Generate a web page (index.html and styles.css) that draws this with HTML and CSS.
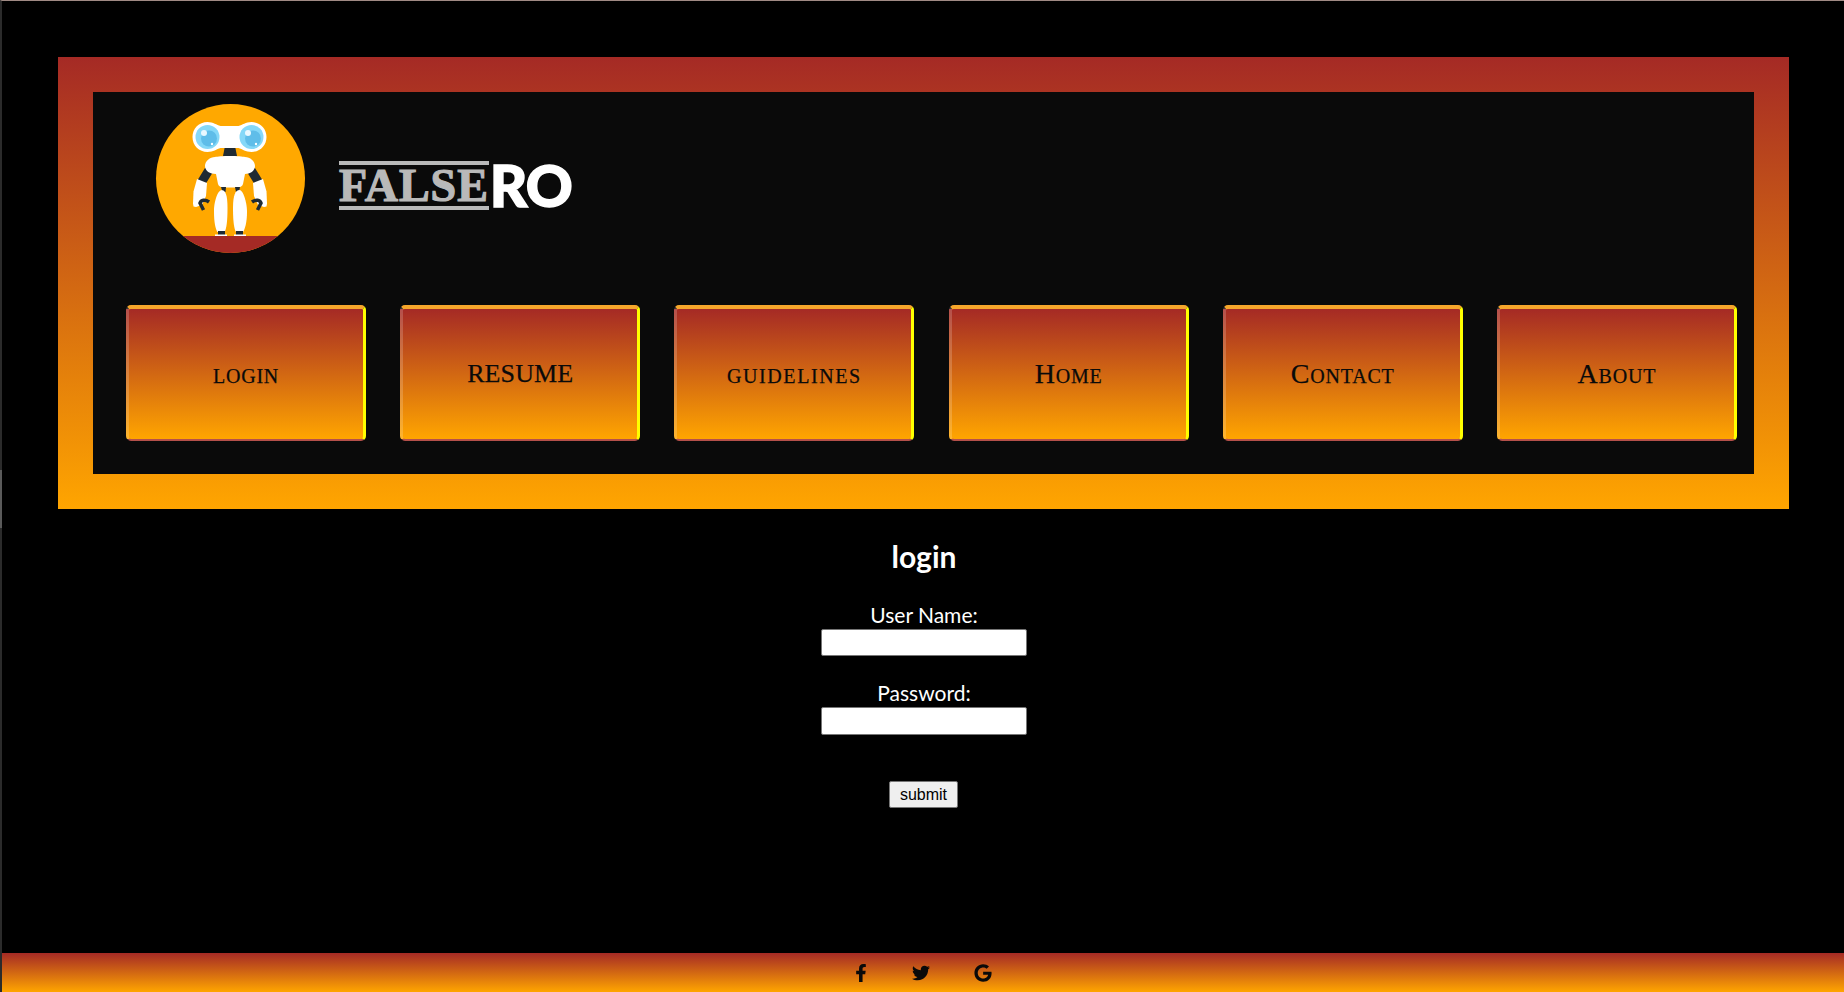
FILE: index.html
```html
<!DOCTYPE html>
<html lang="en">
<head>
<meta charset="utf-8">
<title>login</title>
<link rel="stylesheet" href="styles.css">
</head>
<body>
<div class="page">
  <span class="rail-mark"></span>
  <main class="content">
    <header class="banner">
      <div class="banner-inner">
        <div class="brand">
          <svg class="robot" viewBox="0 0 160 160" aria-hidden="true">
            <defs><clipPath id="disc"><circle cx="80.5" cy="78.5" r="74.5"/></clipPath></defs>
            <circle cx="80.5" cy="78.5" r="74.5" fill="#ffa800"/>
            <rect x="0" y="136" width="160" height="24" fill="#a52a25" clip-path="url(#disc)"/>
            <path d="M75 46h10l2 10H73z" fill="#1f2a33"/>
            <path d="M57.500 22c6 0 9 3 13 4h18c4-1 7-4 13-4 8.500 0 15 6.500 15 15s-6.500 15-15 15c-6 0-9-3-13-4H70.500c-4 1-7 4-13 4-8.500 0-15-6.500-15-15s6.500-15 15-15z" fill="#fff"/>
            <circle cx="57.500" cy="37" r="12" fill="#85d8f8"/>
            <circle cx="59" cy="38.500" r="8" fill="#5fbde9"/>
            <circle cx="54" cy="33" r="3" fill="#e9f8ff"/>
            <circle cx="62" cy="44" r="1.200" fill="#fff"/>
            <circle cx="101.500" cy="37" r="12" fill="#85d8f8"/>
            <circle cx="103" cy="38.500" r="8" fill="#5fbde9"/>
            <circle cx="98" cy="33" r="3" fill="#e9f8ff"/>
            <circle cx="106" cy="44" r="1.200" fill="#fff"/>
            <path d="M59 70L51 83" stroke="#1f2a33" stroke-width="9" fill="none"/>
            <path d="M101 70L109 83" stroke="#1f2a33" stroke-width="9" fill="none"/>
            <path d="M47 79l10 4-1 13-4 9-6 2-2.500-.5-.5-3 .5-12z" fill="#fff"/>
            <path d="M113 79l-10 4 1 13 4 9 6 2 2.500-.5.5-3-.5-12z" fill="#fff"/>
            <path d="M59 102c-4-3-8-2-9 1l3.500 7" stroke="#1f2a33" stroke-width="3.500" fill="none"/>
            <path d="M102 102c4-3 8-2 9 1l-3.500 7" stroke="#1f2a33" stroke-width="3.500" fill="none"/>
            <path d="M65 57c4-1.500 26-1.500 30 0 5 0 10 4 10 9s-5 8-10 8l-2 10c-.5 2-3 3.500-5 3.500H73c-2 0-4.500-1.500-5-3.500l-2-10c-6 0-11-3-11-8s5-9 10-9z" fill="#fff"/>
            <path d="M71 87h5l-.5 5h-3zM85 87h5l-1 5h-3z" fill="#1f2a33"/>
            <path d="M71.500 90c4 0 6 5 6 18s-1 21-3 24h-7c-2-3-3.500-10-3.500-20 0-10 3.500-22 8-22z" fill="#fff"/>
            <path d="M89.500 90c-4 0-6.500 5-6.500 18s1 21 3 24h7c2-3 4-10 4-20s-4-22-7.500-22z" fill="#fff"/>
            <path d="M68 131h7v4h-7zM86 131h7v4h-7z" fill="#1f2a33"/>
            <path d="M65 134.500h12v1.500H65zM84 134.500h12v1.500H84z" fill="#fff"/>
          </svg>
          <div class="wordmark"><span class="word-false">FALSE</span><span class="word-ro">RO</span></div>
        </div>
        <nav class="nav">
          <a class="nav-btn caps" href="#">login</a>
          <a class="nav-btn resume" href="#">RESUME</a>
          <a class="nav-btn caps caps-wide" href="#">guidelines</a>
          <a class="nav-btn caps" href="#">Home</a>
          <a class="nav-btn caps" href="#">Contact</a>
          <a class="nav-btn caps" href="#">About</a>
        </nav>
      </div>
    </header>
    <form class="login">
      <h1 class="login-title">login</h1>
      <label class="field">User Name:<input class="input" type="text"></label>
      <label class="field">Password:<input class="input" type="password"></label>
      <button class="submit" type="button">submit</button>
    </form>
  </main>
  <footer class="footer">
    <svg class="icon" viewBox="0 0 320 512" aria-label="Facebook"><path d="M279.14 288l14.22-92.66h-88.91v-60.13c0-25.35 12.42-50.06 52.24-50.06h40.42V6.26S260.43 0 225.36 0c-73.22 0-121.08 44.38-121.08 124.72v70.62H22.89V288h81.39v224h100.17V288z"/></svg>
    <svg class="icon" viewBox="0 0 512 512" aria-label="Twitter"><path d="M459.37 151.716c.325 4.548.325 9.097.325 13.645 0 138.72-105.583 298.558-298.558 298.558-59.452 0-114.68-17.219-161.137-47.106 8.447.974 16.568 1.299 25.34 1.299 49.055 0 94.213-16.568 130.274-44.832-46.132-.975-84.792-31.188-98.112-72.772 6.498.974 12.995 1.624 19.818 1.624 9.421 0 18.843-1.3 27.614-3.573-48.081-9.747-84.143-51.98-84.143-102.985v-1.299c13.969 7.797 30.214 12.67 47.431 13.319-28.264-18.843-46.781-51.005-46.781-87.391 0-19.492 5.197-37.36 14.294-52.954 51.655 63.675 129.3 105.258 216.365 109.807-1.624-7.797-2.599-15.918-2.599-24.04 0-57.828 46.782-104.934 104.934-104.934 30.213 0 57.502 12.67 76.67 33.137 23.715-4.548 46.456-13.32 66.599-25.34-7.798 24.366-24.366 44.833-46.132 57.827 21.117-2.273 41.584-8.122 60.426-16.243-14.292 20.791-32.161 39.308-52.628 54.253z"/></svg>
    <svg class="icon icon-last" viewBox="0 0 488 512" aria-label="Google"><path d="M488 261.8C488 403.3 391.1 504 248 504 110.8 504 0 393.2 0 256S110.8 8 248 8c66.8 0 123 24.5 166.3 64.9l-67.5 64.9C258.5 52.6 94.3 116.6 94.3 256c0 86.5 69.1 156.6 153.7 156.6 98.2 0 135-70.4 140.8-106.9H248v-85.3h236.1c2.3 12.7 3.9 24.9 3.9 41.4z"/></svg>
  </footer>
</div>
</body>
</html>
```
FILE: styles.css
```css
* { box-sizing: border-box; }
html, body { margin: 0; height: 100%; background: #000; }
body { overflow: hidden; }
.page {
  position: relative;
  height: 992px;
  display: flex;
  flex-direction: column;
  border-top: 1px solid #a08a84;
  border-left: 2px solid #2b2b2b;
  background: #000;
}
.rail-mark { position: absolute; left: -2px; top: 469px; width: 2px; height: 58px; background: #5a5a5a; }
.content { flex: 1; padding: 56px 55px 0 56px; }
.banner { border: 35px solid transparent; height: 452px; background: linear-gradient(#a52a25, #ffa500) border-box; }
.banner-inner { height: 382px; background: #0a0a0a; display: flex; flex-direction: column; }
.brand { height: 213px; display: flex; align-items: flex-start; padding: 8px 0 0 57px; }
.robot { width: 160px; height: 160px; flex: none; }
.wordmark { display: flex; align-items: center; margin: 59px 0 0 29px; }
.word-false {
  font: bold 46px/41px "Liberation Serif", serif;
  letter-spacing: 1px;
  color: #b9b9b9;
  -webkit-text-stroke: 1.2px #b9b9b9;
  border-top: 4px solid #b9b9b9;
  border-bottom: 4px solid #b9b9b9;
  height: 49px;
}
.word-ro {
  font: 900 58px/52px "Lato", sans-serif;
  color: #fff;
  -webkit-text-stroke: 1.5px #fff;
  margin-left: 1px;
  letter-spacing: -1px;
}
.nav { display: flex; justify-content: space-between; padding: 0 17px 0 33px; }
.nav-btn {
  width: 240px;
  height: 136px;
  display: flex;
  align-items: center;
  justify-content: center;
  border-style: solid;
  border-width: 4px 3px 2px 3px;
  border-color: #f6a62b #ffff00 #b5504a rgba(255,255,255,.18);
  border-radius: 5px;
  background: linear-gradient(#a52a25, #ffa500);
  color: #0a0a0a;
  -webkit-text-stroke: .25px #0a0a0a;
  text-decoration: none;
  font-family: "Liberation Serif", serif;
}
.caps { font-size: 28px; font-variant: small-caps; letter-spacing: .8px; }
.caps-wide { letter-spacing: 1.6px; }
.resume { font-size: 26px; letter-spacing: .1px; }
.login { display: flex; flex-direction: column; align-items: center; color: #fff; margin-right: -1px; }
.login-title { font: bold 30px/34px "Lato", sans-serif; margin: 30px 0 0; }
.field { display: flex; flex-direction: column; align-items: center; font: 21px/28px "Lato", sans-serif; margin-top: 28px; }
.field + .field { margin-top: 23px; }
.field + .field .input { height: 28px; }
.input { width: 206px; height: 27px; margin: 0; border: 1px solid #767676; border-radius: 2px; background: #fff; display: block; }
.submit {
  width: 69px;
  height: 27px;
  margin: 46px 1px 0 0;
  padding: 0;
  font: 16px "Liberation Sans", sans-serif;
  background: #efefef;
  color: #000;
  border: 1px solid #767676;
  border-radius: 2px;
}
.footer {
  height: 39px;
  flex: none;
  display: flex;
  align-items: center;
  justify-content: center;
  gap: 42px;
  padding-right: 2px;
  background: linear-gradient(#a52a25, #ffa500);
}
.icon { height: 18px; width: 18px; fill: #0a0a0a; }
.icon-last { margin-left: 2px; }
```
